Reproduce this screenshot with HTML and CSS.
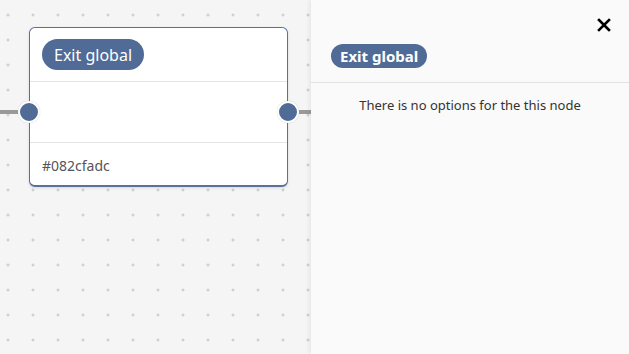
FILE: index.html
```html
<!DOCTYPE html>
<html lang="en">
<head>
  <meta charset="UTF-8">
  <meta name="viewport" content="width=device-width, initial-scale=1.0">
  <title>Flow editor</title>
  <link rel="stylesheet" href="styles.css">
</head>
<body>
  <div class="editor">
    <div class="canvas">
      <span class="edge edge-in"></span>
      <span class="edge edge-out"></span>
      <div class="node">
        <div class="node-head">
          <span class="tag">Exit global</span>
        </div>
        <div class="node-body">
          <span class="handle handle-in"></span>
          <span class="handle handle-out"></span>
        </div>
        <div class="node-foot">#082cfadc</div>
      </div>
    </div>
    <aside class="panel">
      <div class="panel-top">
        <button class="close" aria-label="Close">
          <svg width="14" height="14" viewBox="0 0 14 14">
            <path d="M2 2 L12 12 M12 2 L2 12" stroke="#000" stroke-width="2.6" stroke-linecap="square"/>
          </svg>
        </button>
      </div>
      <div class="panel-head">
        <span class="tag tag-small">Exit global</span>
      </div>
      <p class="empty">There is no options for the this node</p>
    </aside>
  </div>
</body>
</html>
```

FILE: styles.css
```css
* {
  margin: 0;
  padding: 0;
  box-sizing: border-box;
}

html, body {
  width: 100%;
  height: 100%;
}

body {
  font-family: "Noto Sans", "Open Sans", sans-serif;
  color: #333;
}

.editor {
  display: flex;
  height: 100%;
}

.canvas {
  position: relative;
  width: 311px;
  flex-shrink: 0;
  background-color: #f5f5f5;
  background-image: radial-gradient(circle, #c4c4c4 1px, transparent 1.3px);
  background-size: 25px 25px;
  background-position: -4.5px 2.5px;
  overflow: hidden;
}

.edge {
  position: absolute;
  top: 110px;
  height: 4px;
  background-color: #999;
}

.edge-in {
  left: 0;
  width: 22px;
}

.edge-out {
  left: 290px;
  width: 21px;
}

.node {
  position: absolute;
  left: 29px;
  top: 27px;
  width: 259px;
  height: 160px;
  display: flex;
  flex-direction: column;
  background-color: #fff;
  border: 1px solid #5b7199;
  border-bottom-width: 2px;
  border-radius: 6px;
  box-shadow: 0 1px 3px rgba(0, 0, 0, .12);
}

.node-head {
  height: 54px;
  padding: 11px 12px;
  border-bottom: 1px solid #e4e4e4;
}

.tag {
  display: inline-flex;
  align-items: center;
  height: 31px;
  padding: 0 12px;
  border-radius: 16px;
  background-color: #4f6b96;
  color: #fff;
  font-size: 16px;
}

.node-body {
  position: relative;
  height: 61px;
  border-bottom: 1px solid #e4e4e4;
}

.handle {
  position: absolute;
  top: 19px;
  width: 22px;
  height: 22px;
  border: 2px solid #fff;
  border-radius: 50%;
  background-color: #4f6b96;
  box-shadow: 0 0 1px rgba(0, 0, 0, .25);
}

.handle-in {
  left: -12px;
}

.handle-out {
  right: -12px;
}

.node-foot {
  flex: 1;
  display: flex;
  align-items: center;
  padding: 2px 12px 0;
  font-size: 14px;
  color: #555;
}

.panel {
  flex: 1;
  background-color: #fafafa;
  box-shadow: -2px 0 4px rgba(0, 0, 0, .06);
  position: relative;
}

.panel-top {
  display: flex;
  justify-content: flex-end;
  padding: 18px 18px 0 0;
}

.close {
  display: flex;
  width: 14px;
  height: 14px;
  border: none;
  background: none;
  cursor: pointer;
}

.panel-head {
  padding: 12px 20px 14px;
  border-bottom: 1px solid #e2e2e2;
}

.tag-small {
  height: 24px;
  padding: 0 9px;
  border-radius: 12px;
  font-size: 15px;
  font-weight: bold;
}

.empty {
  padding-top: 13px;
  text-align: center;
  font-size: 13px;
  color: #333;
}
```
